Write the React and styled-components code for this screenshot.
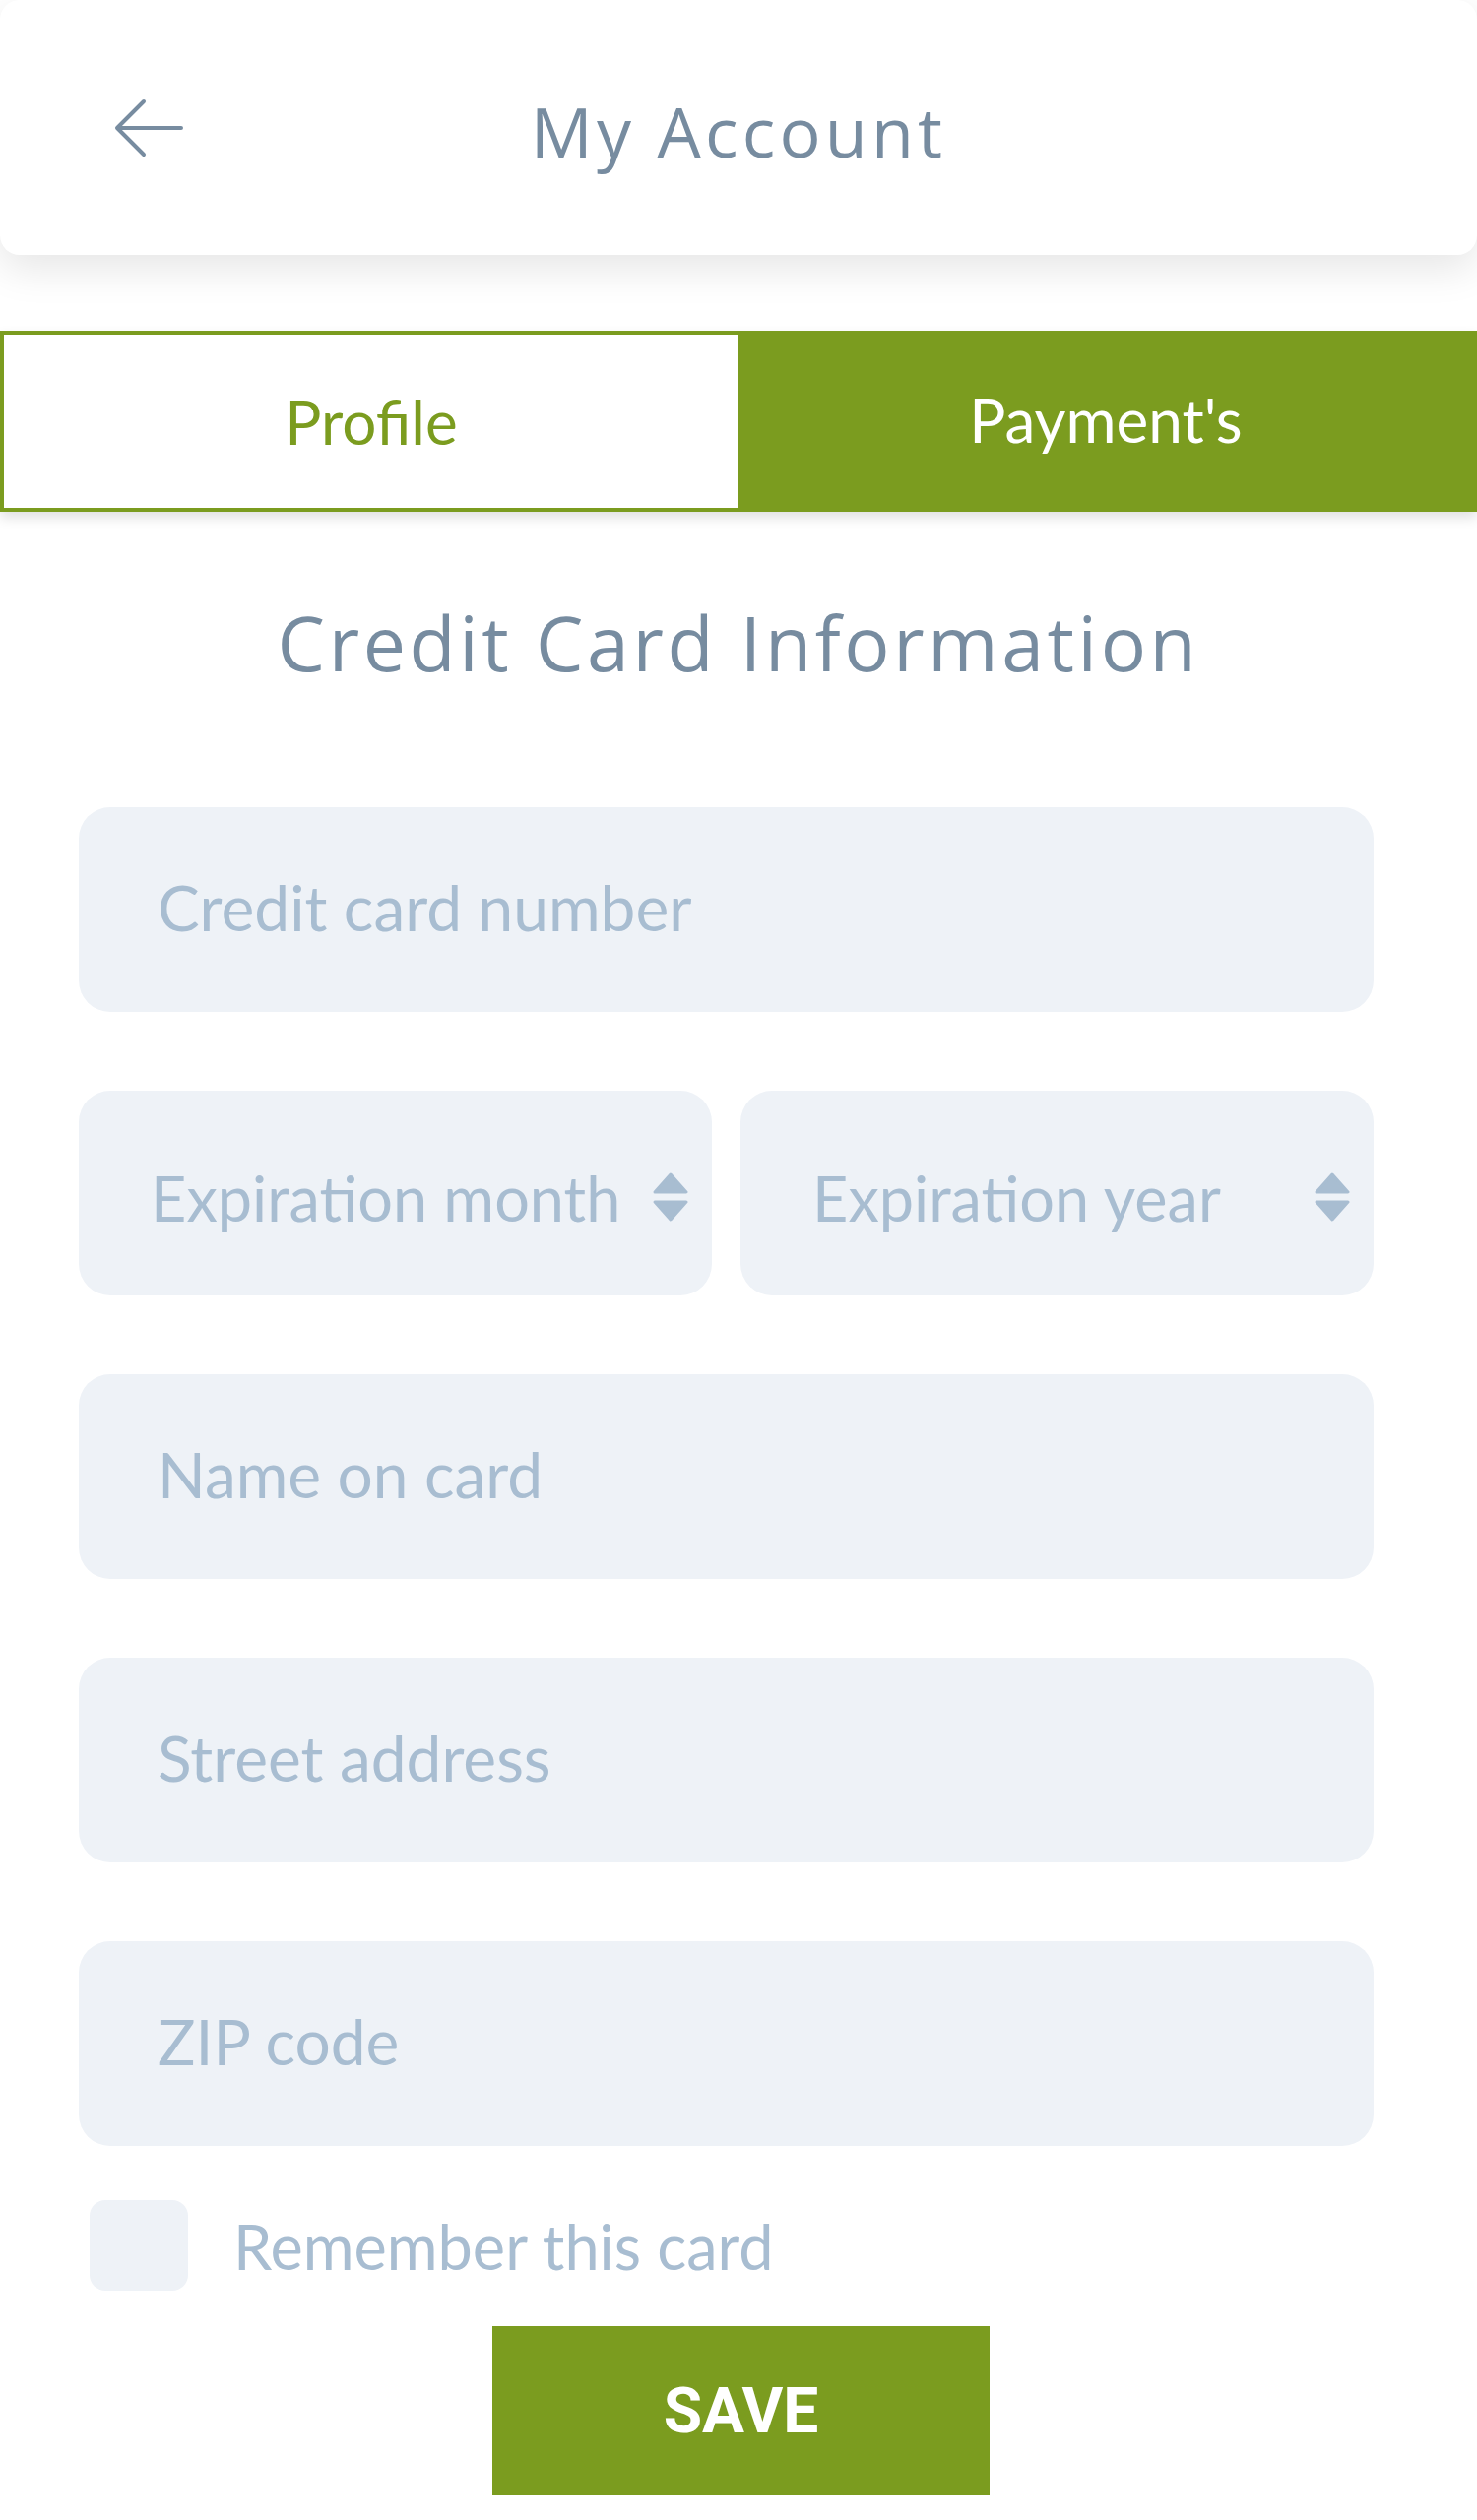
import React from 'react'
import styled, { createGlobalStyle } from 'styled-components'

const green = '#7b9c1f'
const slate = '#778ca0'
const muted = '#a8bdd1'
const fieldBg = '#eef2f7'

const GlobalStyle = createGlobalStyle`
  body {
    margin: 0;
    background: #fff;
    font-family: Lato, "Open Sans", sans-serif;
  }
`

const App = () => {
  return (
    <Page>
      <GlobalStyle />
      <Header>
        <Back aria-label="back">
          <svg width="72" height="60" viewBox="0 0 72 60" fill="none">
            <path d="M68 30H4M30 3L3 30l27 27" stroke={slate} strokeWidth="4" strokeLinecap="round" strokeLinejoin="round" />
          </svg>
        </Back>
        <HeaderTitle>My Account</HeaderTitle>
        <span />
      </Header>

      <Tabs>
        <Tab>Profile</Tab>
        <Tab $active>Payment's</Tab>
      </Tabs>

      <Title>Credit Card Information</Title>

      <Form>
        <Field placeholder="Credit card number" />
        <Row>
          <Select>
            Expiration month
            <Arrows />
          </Select>
          <Select>
            Expiration year
            <Arrows />
          </Select>
        </Row>
        <Field placeholder="Name on card" />
        <Field placeholder="Street address" />
        <Field placeholder="ZIP code" />
      </Form>

      <Remember>
        <Box />
        Remember this card
      </Remember>

      <Footer>
        <Save>SAVE</Save>
      </Footer>
    </Page>
  )
}

const Arrows = () => (
  <svg width="36" height="50" viewBox="0 0 36 50">
    <path d="M18 2L34 20H2Z" fill={muted} stroke={muted} strokeWidth="3" strokeLinejoin="round" />
    <path d="M18 48L34 30H2Z" fill={muted} stroke={muted} strokeWidth="3" strokeLinejoin="round" />
  </svg>
)

const Page = styled.div`
  width: 1500px;
  padding-bottom: 20px;
`

const Header = styled.header`
  height: 259px;
  background: #fff;
  border-radius: 20px;
  box-shadow: 0 14px 40px rgba(0, 0, 0, 0.1);
  display: grid;
  grid-template-columns: 1fr auto 1fr;
  align-items: center;
`

const Back = styled.button`
  justify-self: start;
  margin-left: 116px;
  padding: 0;
  border: 0;
  background: none;
  display: flex;
  cursor: pointer;
`

const HeaderTitle = styled.h1`
  margin: 6px 0 0;
  font-family: "Open Sans", sans-serif;
  font-weight: 400;
  font-size: 70px;
  letter-spacing: 4.2px;
  color: ${slate};
`

const Tabs = styled.div`
  margin-top: 77px;
  height: 184px;
  display: flex;
  border: 4px solid ${green};
  box-sizing: border-box;
  box-shadow: 0 6px 12px rgba(0, 0, 0, 0.12);
`

const Tab = styled.div`
  flex: 1;
  display: flex;
  align-items: center;
  justify-content: center;
  font-size: 62px;
  background: ${(p) => (p.$active ? green : '#fff')};
  color: ${(p) => (p.$active ? '#fff' : green)};
  padding-bottom: ${(p) => (p.$active ? '4px' : '0')};
`

const Title = styled.h2`
  margin: 80px 0 0;
  text-align: center;
  font-family: "Open Sans", sans-serif;
  font-weight: 400;
  font-size: 77px;
  letter-spacing: 3.6px;
  line-height: 105px;
  color: ${slate};
`

const Form = styled.div`
  display: flex;
  flex-direction: column;
  gap: 80px;
  padding: 115px 105px 0 80px;
`

const Field = styled.input`
  height: 208px;
  box-sizing: border-box;
  border: 0;
  border-radius: 32px;
  background: ${fieldBg};
  padding: 0 80px 6px;
  font-family: Lato, sans-serif;
  font-size: 64px;
  color: ${slate};
  outline: none;
  &::placeholder {
    color: ${muted};
  }
`

const Row = styled.div`
  display: grid;
  grid-template-columns: 1fr 1fr;
  gap: 29px;
`

const Select = styled.div`
  height: 208px;
  border-radius: 32px;
  background: ${fieldBg};
  display: flex;
  align-items: center;
  justify-content: space-between;
  padding: 8px 24px 0 73px;
  box-sizing: border-box;
  font-size: 63px;
  color: ${muted};
`

const Remember = styled.label`
  display: flex;
  align-items: center;
  gap: 46px;
  margin: 55px 0 0 91px;
  font-size: 63px;
  color: ${muted};
`

const Box = styled.span`
  width: 100px;
  height: 92px;
  border-radius: 16px;
  background: ${fieldBg};
`

const Footer = styled.div`
  display: flex;
  justify-content: center;
  padding: 36px 0 0 5px;
`

const Save = styled.button`
  width: 505px;
  height: 172px;
  border: 0;
  background: ${green};
  color: #fff;
  font-family: Roboto, sans-serif;
  font-weight: 700;
  font-size: 64px;
  cursor: pointer;
`

export default App
